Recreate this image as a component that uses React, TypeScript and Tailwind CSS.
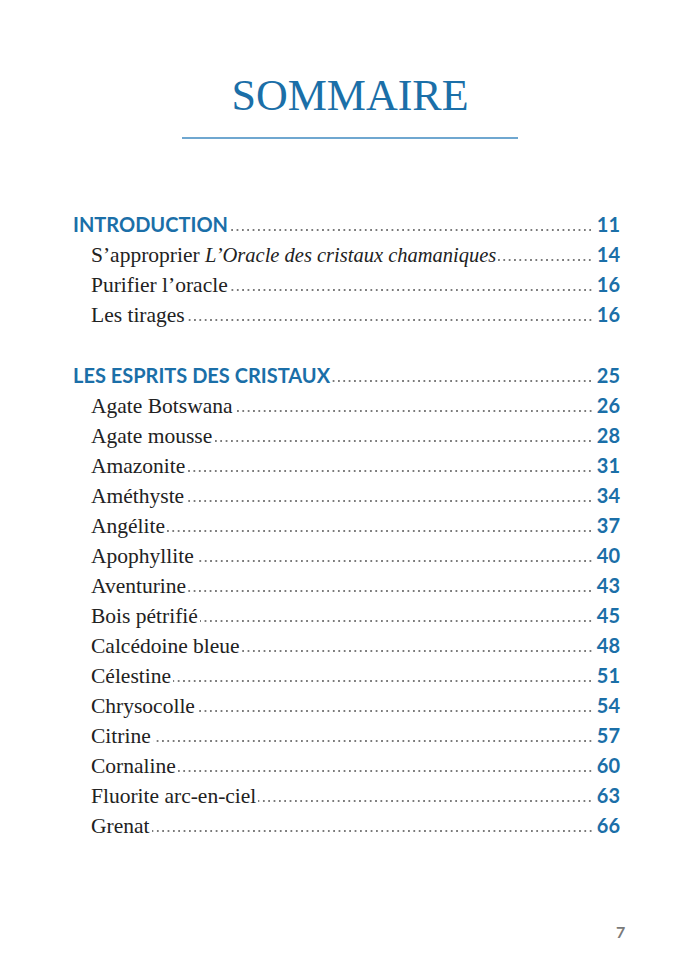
import React from "react";

type Entry = { label: React.ReactNode; page: string };

const intro: Entry[] = [
  {
    label: (
      <>
        S’approprier <i className="text-[20.5px]">L’Oracle des cristaux chamaniques</i>
      </>
    ),
    page: "14",
  },
  { label: "Purifier l’oracle", page: "16" },
  { label: "Les tirages", page: "16" },
];

const esprits: Entry[] = [
  { label: "Agate Botswana", page: "26" },
  { label: "Agate mousse", page: "28" },
  { label: "Amazonite", page: "31" },
  { label: "Améthyste", page: "34" },
  { label: "Angélite", page: "37" },
  { label: "Apophyllite", page: "40" },
  { label: "Aventurine", page: "43" },
  { label: "Bois pétrifié", page: "45" },
  { label: "Calcédoine bleue", page: "48" },
  { label: "Célestine", page: "51" },
  { label: "Chrysocolle", page: "54" },
  { label: "Citrine", page: "57" },
  { label: "Cornaline", page: "60" },
  { label: "Fluorite arc-en-ciel", page: "63" },
  { label: "Grenat", page: "66" },
];

function Dots() {
  return (
    <span className="ml-[2px] h-[4px] flex-1 bg-[radial-gradient(circle,#4a4a4a_0.55px,transparent_1px)] bg-[length:5.35px_4px] bg-[position:right_center] bg-repeat-x" />
  );
}

function Heading({ label, page }: { label: string; page: string }) {
  return (
    <div className="flex h-[30px] items-baseline leading-[30px]">
      <span className="whitespace-nowrap text-[20px] font-bold text-[#1b6fa8] [font-family:Lato,sans-serif]">
        {label}
      </span>
      <Dots />
      <span className="pl-[4px] text-[20px] font-bold text-[#1b6fa8] [font-family:Lato,sans-serif]">
        {page}
      </span>
    </div>
  );
}

function Row({ label, page }: Entry) {
  return (
    <div className="flex h-[30px] items-baseline pl-[18px] leading-[30px]">
      <span className="whitespace-nowrap text-[21.5px] text-[#222] [font-family:'Liberation_Serif',serif]">
        {label}
      </span>
      <Dots />
      <span className="pl-[4px] text-[20px] font-bold text-[#1b6fa8] [font-family:Lato,sans-serif]">
        {page}
      </span>
    </div>
  );
}

export default function App() {
  return (
    <div className="relative h-[974px] w-[700px] bg-white">
      <div className="flex flex-col items-center pt-[70px]">
        <h1 className="text-[44px] leading-[52px] text-[#1b6fa8] [font-family:'Liberation_Serif',serif]">
          SOMMAIRE
        </h1>
        <div className="mt-[15px] h-[2px] w-[336px] bg-[#6fa7d0]" />
      </div>
      <div className="ml-[73px] mt-[70px] w-[547px]">
        <Heading label="INTRODUCTION" page="11" />
        {intro.map((e, i) => (
          <Row key={i} {...e} />
        ))}
        <div className="h-[31px]" />
        <Heading label="LES ESPRITS DES CRISTAUX" page="25" />
        {esprits.map((e, i) => (
          <Row key={i} {...e} />
        ))}
      </div>
      <div className="absolute left-[616px] top-[920px] text-[16px] font-bold text-[#7a7a7a] [font-family:Lato,sans-serif]">
        7
      </div>
    </div>
  );
}
